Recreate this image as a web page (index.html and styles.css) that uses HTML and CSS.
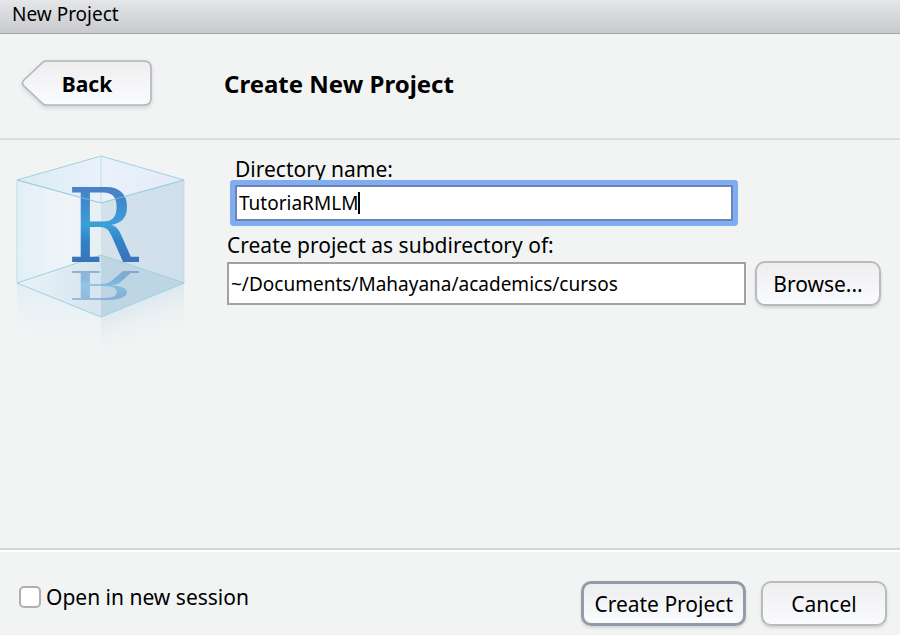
FILE: index.html
```html
<!DOCTYPE html>
<html lang="en">
<head>
<meta charset="utf-8">
<meta name="viewport" content="width=device-width, initial-scale=1">
<title>New Project</title>
<link rel="stylesheet" href="styles.css">
</head>
<body>
<form class="dialog">
  <div class="titlebar">New Project</div>

  <header class="header">
    <button type="button" class="back">
      <svg class="back-shape" viewBox="0 0 132 48" aria-hidden="true">
        <defs>
          <linearGradient id="backFill" x1="0" y1="0" x2="0" y2="1">
            <stop offset="0" stop-color="#eeeeef"/>
            <stop offset="1" stop-color="#fbfcff"/>
          </linearGradient>
        </defs>
        <path d="M25 1H123Q130 1 130 8V38Q130 45 123 45H25Q23 45 21 43L3 26Q0 23 3 20L21 3Q23 1 25 1Z" fill="url(#backFill)" stroke="#b0b4be" stroke-width="1.6"/>
      </svg>
      <span class="back-label">Back</span>
    </button>
    <h1 class="heading">Create New Project</h1>
  </header>

  <main class="body">
    <svg class="logo" viewBox="0 0 170 210" aria-hidden="true">
      <defs>
        <linearGradient id="left" x1="0" y1="0" x2="1" y2="0">
          <stop offset="0" stop-color="#e4eff8"/>
          <stop offset=".6" stop-color="#eff4f8"/>
          <stop offset="1" stop-color="#e6eff3"/>
        </linearGradient>
        <linearGradient id="right" x1="0" y1="0" x2="1" y2="0">
          <stop offset="0" stop-color="#d3e1ea"/>
          <stop offset="1" stop-color="#cfdfeb"/>
        </linearGradient>
        <linearGradient id="top" x1="0" y1="0" x2="1" y2="0">
          <stop offset="0" stop-color="#d9ebf4"/>
          <stop offset=".5" stop-color="#eaf1fb"/>
          <stop offset="1" stop-color="#e2ebf8"/>
        </linearGradient>
        <linearGradient id="floorLeft" x1="0" y1="0" x2="1" y2="0">
          <stop offset="0" stop-color="#eaf2f8"/>
          <stop offset="1" stop-color="#d5e4ef"/>
        </linearGradient>
        <linearGradient id="fadeLeft" gradientUnits="userSpaceOnUse" x1="0" y1="128" x2="0" y2="195">
          <stop offset="0" stop-color="#dfedf5" stop-opacity=".9"/>
          <stop offset=".7" stop-color="#eaf1f5" stop-opacity=".3"/>
          <stop offset="1" stop-color="#f2f4f4" stop-opacity="0"/>
        </linearGradient>
        <linearGradient id="fadeRight" gradientUnits="userSpaceOnUse" x1="118" y1="135" x2="138" y2="192">
          <stop offset="0" stop-color="#d2e2ed"/>
          <stop offset="1" stop-color="#f2f4f4" stop-opacity="0"/>
        </linearGradient>
        <linearGradient id="letter" gradientUnits="userSpaceOnUse" x1="0" y1="32" x2="0" y2="108">
          <stop offset="0" stop-color="#4b80c8"/>
          <stop offset=".2" stop-color="#4288cc"/>
          <stop offset=".5" stop-color="#3ba0d9"/>
          <stop offset=".72" stop-color="#3281c5"/>
          <stop offset="1" stop-color="#3b72b8"/>
        </linearGradient>
      </defs>
      <path d="M1 128L85 162V205L1 172Z" fill="url(#fadeLeft)"/>
      <path d="M168 128L85 162V205L168 192Z" fill="url(#fadeRight)"/>
      <path d="M1 25L85 48V162L1 128Z" fill="url(#left)"/>
      <path d="M168 25L85 48V162L168 128Z" fill="url(#right)"/>
      <path d="M1 25L85 1L168 25L85 48Z" fill="url(#top)"/>
      <path d="M1 128L85 100V162Z" fill="url(#floorLeft)"/>
      <path d="M168 128L85 100V162Z" fill="#bed6e4"/>
      <g fill="none" stroke="#9fd2de" stroke-width="1">
        <path d="M1 25L85 1L168 25L85 48Z"/>
        <path d="M1 128L85 100L168 128L85 162Z"/>
        <path d="M1 25V128M168 25V128M85 1V48" stroke="#bcdde6"/>
      </g>
      <text id="mark" class="letter" x="51" y="107" fill="url(#letter)">R</text>
      <use class="reflection" href="#mark" transform="translate(0 157) scale(1 -.38)"/>
      <path d="M1 25L85 48L168 25" fill="none" stroke="#8fd0dc" stroke-opacity=".6"/>
    </svg>

    <div class="fields">
      <div class="field field-name">
        <label for="name">Directory name:</label>
        <input id="name" class="text text-active" type="text" value="TutoriaRMLM" spellcheck="false" autofocus>
      </div>
      <div class="field">
        <label for="parent">Create project as subdirectory of:</label>
        <div class="picker">
          <input id="parent" class="text" type="text" value="~/Documents/Mahayana/academics/cursos" spellcheck="false" readonly>
          <button type="button" class="btn">Browse...</button>
        </div>
      </div>
    </div>
  </main>

  <footer class="footer">
    <label class="session"><input type="checkbox" class="check">Open in new session</label>
    <div class="actions">
      <button type="submit" class="btn btn-default">Create Project</button>
      <button type="button" class="btn">Cancel</button>
    </div>
  </footer>
</form>
<script src="script.js"></script>
</body>
</html>
```
FILE: styles.css
```css
* {
  box-sizing: border-box;
}

body {
  margin: 0;
  background: #f2f4f4;
  color: #000;
  font-family: "Noto Sans", sans-serif;
  font-size: 21px;
  line-height: 28px;
}

.dialog {
  display: flex;
  flex-direction: column;
  min-height: 100vh;
}

.titlebar {
  height: 34px;
  padding: 0 12px;
  border-bottom: 1px solid #a3a3aa;
  background: linear-gradient(#e5e6ea, #c9cace);
  font-size: 19px;
}

.header {
  display: flex;
  align-items: center;
  gap: 71px;
  height: 106px;
  padding: 0 21px 4px;
  border-bottom: 2px solid #dcdede;
}

.back {
  position: relative;
  width: 132px;
  height: 48px;
  padding: 0;
  border: 0;
  background: none;
  color: inherit;
  font: inherit;
  font-weight: 700;
}

.back-shape {
  position: absolute;
  inset: 0;
  width: 100%;
  overflow: visible;
  filter: drop-shadow(0 2px 2px #0002);
}

.back-label {
  position: relative;
}

.heading {
  margin: 0;
  font-size: 24px;
}

.body {
  display: flex;
  flex: 1;
  gap: 41px;
  padding: 15px 19px 0 16px;
}

.logo {
  flex: none;
  width: 170px;
  height: 210px;
}

.letter {
  font-family: "DejaVu Serif Condensed", "DejaVu Serif", serif;
  font-size: 103px;
}

.reflection {
  opacity: .45;
}

.fields {
  display: flex;
  flex: 1;
  flex-direction: column;
  gap: 10px;
}

.field {
  display: flex;
  flex-direction: column;
  gap: 2px;
}

.field-name {
  margin-right: 148px;
  padding-left: 8px;
}

.text {
  width: 100%;
  min-width: 0;
  height: 43px;
  padding: 0 2px;
  border: 2px solid #a2a2a2;
  background: #fff;
  color: inherit;
  font: inherit;
  font-size: 19px;
}

.text-active {
  height: 36px;
  border-color: #6c84b4;
  border-radius: 1px;
  box-shadow: 0 0 0 5px #80adf2;
  outline: none;
  background: linear-gradient(#000, #000) no-repeat var(--caret-x, 2px) center / 2px 22px #fff;
  caret-color: transparent;
}

.picker {
  display: flex;
  align-items: center;
  gap: 9px;
}

.btn {
  flex: none;
  min-width: 126px;
  height: 45px;
  padding: 0 10px;
  border: 2px solid #b9babd;
  border-radius: 10px;
  background: linear-gradient(#eeeeef, #fafbff);
  box-shadow: 0 2px 3px #0002;
  color: inherit;
  font: inherit;
}

.btn-default {
  border: 3px solid #929ba7;
}

.footer {
  display: flex;
  align-items: flex-start;
  justify-content: space-between;
  height: 88px;
  padding: 31px 13px 0 19px;
  border-top: 2px solid #d4d5d5;
  border-bottom: 1px solid #fff;
  box-shadow: inset 0 2px #fff;
}

.session {
  display: flex;
  align-items: center;
  gap: 5px;
  padding-top: 2px;
}

.check {
  width: 22px;
  height: 22px;
  margin: 0;
  border: 2px solid #b0b0b0;
  border-radius: 5px;
  background: #fff;
  appearance: none;
}

.check:checked {
  background: #80adf2;
}

.actions {
  display: flex;
  gap: 15px;
}
```
FILE: script.js
```js
// Draws a steady caret after the last character of the name box.
const nameBox = document.getElementById("name");
const pen = document.createElement("canvas").getContext("2d");

function placeCaret() {
  const style = getComputedStyle(nameBox);
  pen.font = `${style.fontSize} ${style.fontFamily}`;
  const x = pen.measureText(nameBox.value).width + parseFloat(style.paddingLeft);
  nameBox.style.setProperty("--caret-x", `${Math.round(x)}px`);
}

nameBox.addEventListener("input", placeCaret);
placeCaret();
```
